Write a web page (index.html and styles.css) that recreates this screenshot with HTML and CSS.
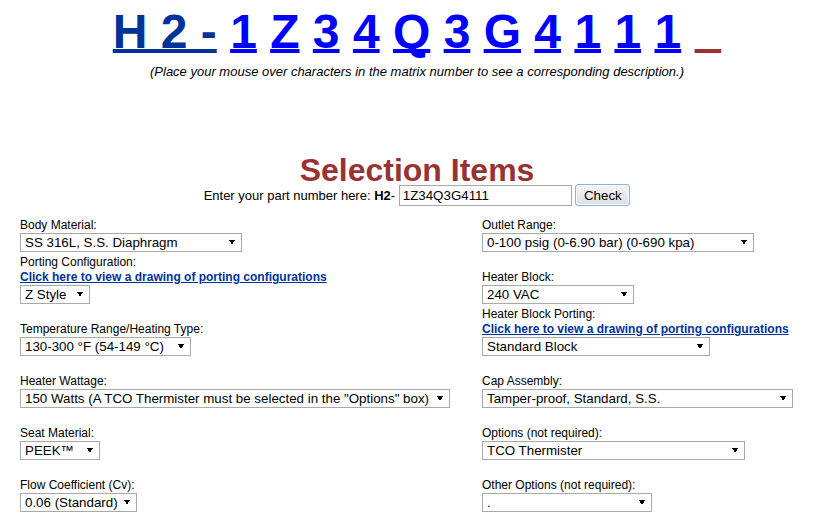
FILE: index.html
```html
<!DOCTYPE html>
<html lang="en">
<head>
  <meta charset="UTF-8">
  <title>Selection Items</title>
  <link rel="stylesheet" href="styles.css">
</head>
<body>
  <div class="page">
    <div class="matrix">
      <a class="mx-fixed" href="#">H 2 -</a> <a class="mx" href="#">1</a> <a class="mx" href="#">Z</a> <a class="mx" href="#">3</a> <a class="mx" href="#">4</a> <a class="mx" href="#">Q</a> <a class="mx" href="#">3</a> <a class="mx" href="#">G</a> <a class="mx" href="#">4</a> <a class="mx" href="#">1</a> <a class="mx" href="#">1</a> <a class="mx" href="#">1</a> <a class="mx-blank" href="#">&nbsp;&nbsp;</a>
    </div>
    <p class="matrix-note">(Place your mouse over characters in the matrix number to see a corresponding description.)</p>

    <h1 class="sel-title">Selection Items</h1>
    <p class="part-row">Enter your part number here: <b>H2</b>- <input type="text" class="part-input" value="1Z34Q3G4111"> <input type="button" class="part-check" value="Check"></p>

    <div class="fields">
      <div class="field">
        <label>Body Material:</label>
        <select class="sel w-body"><option>SS 316L, S.S. Diaphragm</option></select>
      </div>
      <div class="field">
        <label>Outlet Range:</label>
        <select class="sel w-outlet"><option>0-100 psig (0-6.90 bar) (0-690 kpa)</option></select>
      </div>

      <div class="field">
        <label>Porting Configuration:</label>
        <a class="field-link" href="#">Click here to view a drawing of porting configurations</a>
        <select class="sel w-porting"><option>Z Style</option></select>
      </div>
      <div class="field">
        <label>Heater Block:</label>
        <select class="sel w-block"><option>240 VAC</option></select>
      </div>

      <div class="field">
        <label>Temperature Range/Heating Type:</label>
        <select class="sel w-temp"><option>130-300 °F (54-149 °C)</option></select>
      </div>
      <div class="field">
        <label>Heater Block Porting:</label>
        <a class="field-link" href="#">Click here to view a drawing of porting configurations</a>
        <select class="sel w-blockport"><option>Standard Block</option></select>
      </div>

      <div class="field">
        <label>Heater Wattage:</label>
        <select class="sel w-watt"><option>150 Watts (A TCO Thermister must be selected in the "Options" box)</option></select>
      </div>
      <div class="field">
        <label>Cap Assembly:</label>
        <select class="sel w-cap"><option>Tamper-proof, Standard, S.S.</option></select>
      </div>

      <div class="field">
        <label>Seat Material:</label>
        <select class="sel w-seat"><option>PEEK™</option></select>
      </div>
      <div class="field">
        <label>Options (not required):</label>
        <select class="sel w-options"><option>TCO Thermister</option></select>
      </div>

      <div class="field">
        <label>Flow Coefficient (Cv):</label>
        <select class="sel w-flow"><option>0.06 (Standard)</option></select>
      </div>
      <div class="field">
        <label>Other Options (not required):</label>
        <select class="sel w-other"><option>.</option></select>
      </div>
    </div>
  </div>
</body>
</html>
```

FILE: styles.css
```css
* {
  box-sizing: border-box;
}
body {
  margin: 0;
  background: #fff;
  color: #000;
  font-family: "Liberation Sans", Arial, sans-serif;
}
.page {
  padding-left: 16px;
}
.matrix {
  padding-top: 4px;
  text-align: center;
  font-size: 48px;
  font-weight: bold;
  line-height: 55px;
  white-space: nowrap;
}
.matrix a {
  text-decoration: underline;
  text-decoration-thickness: 4px;
  text-underline-offset: 1px;
  text-decoration-skip-ink: none;
}
.mx-fixed {
  color: #003399;
}
.mx {
  color: #0000ff;
}
.mx-blank {
  color: #993333;
}
.matrix-note {
  margin: 5px 0 0;
  text-align: center;
  font-size: 13px;
  font-style: italic;
  line-height: 15px;
}
.sel-title {
  margin: 78px 0 0;
  text-align: center;
  font-size: 32px;
  line-height: 26px;
  color: #993333;
}
.part-row {
  margin: 1px 0 0;
  text-align: center;
  font-size: 13px;
}
.part-input {
  width: 173px;
  height: 21px;
  padding: 1px 3px;
  border: 1px solid #a9a9a9;
  font-family: "Liberation Sans", Arial, sans-serif;
  font-size: 13.33px;
  color: #000;
}
.part-check {
  width: 55px;
  height: 22px;
  padding: 0 6px;
  border: 1px solid #8db2e3;
  border-radius: 3px;
  background: linear-gradient(#f6f6f6, #dedede);
  box-shadow: inset 0 0 0 1px #f8fbff;
  font-family: "Liberation Sans", Arial, sans-serif;
  font-size: 13.33px;
  color: #000;
}
.fields {
  display: grid;
  grid-template-columns: 462px 1fr;
  grid-template-rows: 34px;
  grid-auto-rows: 52px;
  margin: 12px 0 0 4px;
}
.field {
  display: flex;
  flex-direction: column;
  justify-content: flex-end;
  align-items: flex-start;
  font-size: 12px;
  line-height: 15px;
}
.field-link {
  font-weight: bold;
  color: #003399;
  text-decoration: underline;
}
.sel {
  appearance: none;
  -webkit-appearance: none;
  height: 19px;
  margin: 0;
  padding: 0 18px 0 4px;
  border: 1px solid #a9a9a9;
  border-radius: 0;
  font-family: "Liberation Sans", Arial, sans-serif;
  font-size: 13.33px;
  color: #000;
  background-color: #fff;
  background-image: linear-gradient(to top right, transparent 50%, #000 50%), linear-gradient(to bottom right, #000 50%, transparent 50%);
  background-size: 3px 5px;
  background-repeat: no-repeat;
  background-position: right 9px center, right 6px center;
}
.w-body { width: 222px; }
.w-outlet { width: 272px; }
.w-porting { width: 70px; }
.w-block { width: 152px; }
.w-temp { width: 171px; }
.w-blockport { width: 228px; }
.w-watt { width: 430px; }
.w-cap { width: 311px; }
.w-seat { width: 80px; }
.w-options { width: 263px; }
.w-flow { width: 117px; }
.w-other { width: 170px; }
```
